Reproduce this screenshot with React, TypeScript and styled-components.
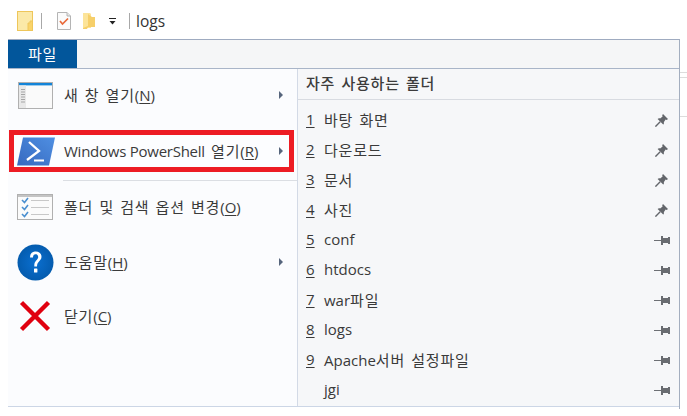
import React from "react";
import styled, { createGlobalStyle } from "styled-components";

const Global = createGlobalStyle`
  html, body { margin: 0; padding: 0; background: #fff; }
  body { font-family: "Open Sans", "Noto Sans CJK KR", sans-serif; color: #333; overflow: hidden; }
  u { text-underline-offset: 2px; text-decoration-thickness: 1px; }
`;

const Page = styled.div`
  width: 687px; height: 416px; display: flex; flex-direction: column; background: #fff;
`;
const QuickBar = styled.div`
  height: 39px; box-sizing: border-box; display: flex; align-items: center; padding: 3px 0 0 17px;
`;
const Sep = styled.span<{ $ml: number; $mr: number }>`
  width: 1px; height: 16px; background: #a8a8a8; margin: 0 ${p => p.$mr}px 0 ${p => p.$ml}px;
`;
const PathTitle = styled.span`
  font-size: 15.5px; color: #333; line-height: 18px;
`;
const QIcon = styled.svg<{ $ml?: number }>`
  display: block; margin-left: ${p => p.$ml ?? 0}px; flex: none;
`;
const Frame = styled.div`
  position: relative; margin-left: 8px; width: 672px; height: 370px; box-sizing: border-box;
  border-top: 1px solid #9fabc0; border-right: 1px solid #a3aebf;
  display: flex; flex-direction: column;
`;
const EdgeTick = styled.span<{ $top: number }>`
  position: absolute; left: 672px; top: ${p => p.$top}px; width: 7px; height: 1px; background: #dcdcdc;
`;
const TabBar = styled.div`
  height: 29px; box-sizing: border-box; flex: none; background: #f5f6f7; border-bottom: 1px solid #a9b5c8; display: flex;
`;
const FileTab = styled.div`
  width: 69px; background: #02569b; color: #fff; font-size: 15px; display: flex;
  align-items: center; justify-content: center; box-sizing: border-box; padding-bottom: 2px;
`;
const Body = styled.div`
  height: 338px; flex: none; box-sizing: border-box; border-bottom: 1px solid #ccd6e6; display: flex;
`;
const LeftPane = styled.div`
  width: 290px; flex: none; box-sizing: border-box; background: #fbfcfe;
  border-right: 1px solid #d3dae6; display: flex; flex-direction: column;
`;
const RightPane = styled.div`
  flex: 1; background: #f6f7f9; display: flex; flex-direction: column;
`;
const Command = styled.div<{ $h: number }>`
  height: ${p => p.$h}px; flex: none; box-sizing: border-box; display: flex; align-items: center;
  font-size: 15px; color: #3a3a3a; padding-left: 7px;
`;
const Highlight = styled(Command)`
  margin: 9px 3px 0 1px; padding-left: 1px; border: 5px solid #ed1c24; background: #fcfdff;
`;
const IconSlot = styled.span`
  width: 40px; display: flex; justify-content: center; flex: none; margin-right: 9px;
`;
const Label = styled.span`
  flex: 1; white-space: nowrap; padding-bottom: 2px;
`;
const Ko = styled.span`
  letter-spacing: 0.8px; word-spacing: 1.5px;
`;
const TightLatin = styled.span`
  letter-spacing: -0.25px;
`;
const Chevron = styled.span`
  width: 0; height: 0; flex: none; margin-right: 14px;
  border-left: 4px solid #56657c; border-top: 4px solid transparent; border-bottom: 4px solid transparent;
`;
const HighlightChevron = styled(Chevron)`
  margin-right: 6px;
`;
const Divider = styled.div`
  height: 1px; margin: 8px 0 0 55px; background: #dbdee3; flex: none;
`;
const PaneTitle = styled.div`
  height: 31px; flex: none; box-sizing: border-box; border-bottom: 1px solid #d8dbe1; padding: 0 0 3px 8px;
  display: flex; align-items: center; font-size: 15px; font-weight: 500; color: #3c3c3c;
`;
const Recent = styled.div`
  display: flex; flex-direction: column; padding-top: 5px;
`;
const RecentRow = styled.div`
  height: 30px; flex: none; display: flex; align-items: center; font-size: 15px; color: #3a3a3a;
  padding: 0 9px 0 8px;
`;
const Num = styled.u`
  width: 18px; flex: none; padding-bottom: 2px;
`;
const Name = styled.span`
  flex: 1; white-space: nowrap; padding-bottom: 2px;
`;
const TiltedPinSvg = styled.svg`
  display: block; flex: none; margin-right: 2px;
`;

const k = (text: string) =>
  text.split(/([가-힣 ]+)/).map((part, i) => (i % 2 ? <Ko key={i}>{part}</Ko> : part));

const BigFolder = () => (
  <QIcon width="16" height="20" viewBox="0 0 16 20">
    <rect x="0.5" y="0.5" width="15" height="19" fill="#fbe9a8" stroke="#eec65a" />
    <path d="M13 10h2.5v9.5H11V12h2z" fill="#fad46a" stroke="#eec65a" />
  </QIcon>
);
const NoteCheck = () => (
  <QIcon $ml={15} width="14" height="18" viewBox="0 0 14 18">
    <path d="M0.5 0.5H10L13.5 4V17.5H0.5Z" fill="#fbfbfb" stroke="#b4b4b4" />
    <path d="M10 0.5V4H13.5" fill="#e8e8e8" stroke="#b4b4b4" />
    <path d="M3 9l2.5 3L11 6.5" fill="none" stroke="#e8693a" strokeWidth="1.7" />
  </QIcon>
);
const SmallFolder = () => (
  <QIcon $ml={12} width="12" height="17" viewBox="0 0 12 17">
    <path d="M0 0H7L8 1V15H0Z" fill="#fce49a" />
    <path d="M5 1L9 4H12V14H5L4 16H0V15L5 13Z" fill="#f6cf6a" />
  </QIcon>
);
const DropArrow = () => (
  <QIcon $ml={14} width="7" height="7" viewBox="0 0 7 7">
    <rect x="0" y="0" width="7" height="1" fill="#222" />
    <path d="M0.5 3H6.5L3.5 6.5Z" fill="#222" />
  </QIcon>
);
const WindowIcon = () => (
  <svg width="35" height="27" viewBox="0 0 35 27" style={{ display: "block" }}>
    <rect x="0.5" y="0.5" width="34" height="26" fill="#fafafa" stroke="#b0b0b0" />
    <rect x="1" y="1" width="33" height="2.4" fill="#1384d8" />
    <rect x="1" y="3.4" width="7" height="22.6" fill="#e8e8e8" />
    {[7, 9.5, 12, 14.5, 17, 19.5].map(y => <rect key={y} x="3" y={y} width="4" height="1" fill="#a5a5a5" />)}
  </svg>
);
const PowerShellIcon = () => (
  <svg width="39" height="29" viewBox="0 0 39 29" style={{ display: "block" }}>
    <defs>
      <linearGradient id="ps" x1="0" y1="1" x2="1" y2="0">
        <stop offset="0" stopColor="#3669bf" />
        <stop offset="1" stopColor="#4f8fe2" />
      </linearGradient>
    </defs>
    <path d="M7 0.5H39L33 28.5H1Z" fill="url(#ps)" />
    <path d="M13 5L23 14L11 23" fill="none" stroke="#fff" strokeWidth="2.3" />
    <path d="M18 23.5H28" stroke="#fff" strokeWidth="2" />
  </svg>
);
const OptionsIcon = () => (
  <svg width="36" height="26" viewBox="0 0 36 26" style={{ display: "block" }}>
    <rect x="0.5" y="0.5" width="35" height="25" fill="#fbfbfb" stroke="#b0b0b0" />
    <rect x="1" y="1" width="34" height="2" fill="#c4c4c4" />
    {[7, 14, 21].map(y => (
      <g key={y}>
        <path d={`M5 ${y - 1}l2.5 2.5L11 ${y - 3}`} fill="none" stroke="#4a8fd0" strokeWidth="1.6" />
        <rect x="14" y={y - 1} width="18" height="1" fill="#c8c8c8" />
      </g>
    ))}
  </svg>
);
const HelpIcon = () => (
  <svg width="37" height="37" viewBox="0 0 37 37" style={{ display: "block" }}>
    <defs>
      <radialGradient id="hp" cx="0.5" cy="0.5" r="0.6">
        <stop offset="0" stopColor="#0a6fd0" />
        <stop offset="1" stopColor="#0358a8" />
      </radialGradient>
    </defs>
    <circle cx="18.5" cy="18.5" r="18" fill="url(#hp)" />
    <path d="M13 13.5C13 9 16 7.5 18.7 7.5C22 7.5 24.5 9.5 24.5 12.7C24.5 17 20 17 20 22.5H17.3C17 16.5 21.2 16 21.2 13C21.2 11.3 20.2 10.2 18.5 10.2C16.7 10.2 16 11.7 16 13.5Z" fill="#fff" />
    <rect x="17" y="24.5" width="3.4" height="4" rx="0.6" fill="#fff" />
  </svg>
);
const CloseIcon = () => (
  <svg width="32" height="32" viewBox="0 0 32 32" style={{ display: "block" }}>
    <path d="M2.5 2.5L29.5 29.5M29.5 2.5L2.5 29.5" stroke="#e0000f" strokeWidth="4.4" />
  </svg>
);
const PinTilted = () => (
  <TiltedPinSvg width="13" height="13" viewBox="0 0 13 13">
    <path d="M8 0L13 5L11.7 6L10.6 5.6L8.8 8.2C9.2 9.2 8.9 10 8.2 10.6L2.6 5C3.3 4.3 4.2 4.1 5.1 4.5L7.6 2.5L7.2 1.2Z" fill="#63666b" />
    <path d="M5.2 7.8L0.4 12.6" stroke="#63666b" strokeWidth="1.4" />
  </TiltedPinSvg>
);
const PinFlat = () => (
  <svg width="16" height="9" viewBox="0 0 16 9" style={{ display: "block" }}>
    <rect x="0" y="4" width="7" height="1" fill="#6d7075" />
    <path d="M7 0H9V2H14V1H16V8H14V7H9V9H7Z" fill="#696c71" />
  </svg>
);

const pinned = ["바탕 화면", "다운로드", "문서", "사진"];
const recent = ["conf", "htdocs", "war파일", "logs", "Apache서버 설정파일"];

export default function App() {
  return (
    <Page>
      <Global />
      <QuickBar>
        <BigFolder />
        <Sep $ml={8} $mr={0} />
        <NoteCheck />
        <SmallFolder />
        <DropArrow />
        <Sep $ml={13} $mr={6} />
        <PathTitle>logs</PathTitle>
      </QuickBar>
      <Frame>
        <EdgeTick $top={32} />
        <EdgeTick $top={37} />
        <EdgeTick $top={76} />
        <TabBar><FileTab><Ko>파일</Ko></FileTab></TabBar>
        <Body>
          <LeftPane>
            <Command $h={52}>
              <IconSlot><WindowIcon /></IconSlot>
              <Label>{k("새 창 열기")}(<u>N</u>)</Label>
              <Chevron />
            </Command>
            <Highlight $h={42}>
              <IconSlot><PowerShellIcon /></IconSlot>
              <Label><TightLatin>Windows PowerShell</TightLatin>{k(" 열기")}(<u>R</u>)</Label>
              <HighlightChevron />
            </Highlight>
            <Divider />
            <Command $h={52}>
              <IconSlot><OptionsIcon /></IconSlot>
              <Label>{k("폴더 및 검색 옵션 변경")}(<u>O</u>)</Label>
            </Command>
            <Command $h={58}>
              <IconSlot><HelpIcon /></IconSlot>
              <Label>{k("도움말")}(<u>H</u>)</Label>
              <Chevron />
            </Command>
            <Command $h={50}>
              <IconSlot><CloseIcon /></IconSlot>
              <Label>{k("닫기")}(<u>C</u>)</Label>
            </Command>
          </LeftPane>
          <RightPane>
            <PaneTitle>{k("자주 사용하는 폴더")}</PaneTitle>
            <Recent>
              {pinned.map((n, i) => (
                <RecentRow key={n}><Num>{i + 1}</Num><Name>{k(n)}</Name><PinTilted /></RecentRow>
              ))}
              {recent.map((n, i) => (
                <RecentRow key={n}><Num>{i + 5}</Num><Name>{k(n)}</Name><PinFlat /></RecentRow>
              ))}
              <RecentRow><Num as="span" /><Name>jgi</Name><PinFlat /></RecentRow>
            </Recent>
          </RightPane>
        </Body>
      </Frame>
    </Page>
  );
}
